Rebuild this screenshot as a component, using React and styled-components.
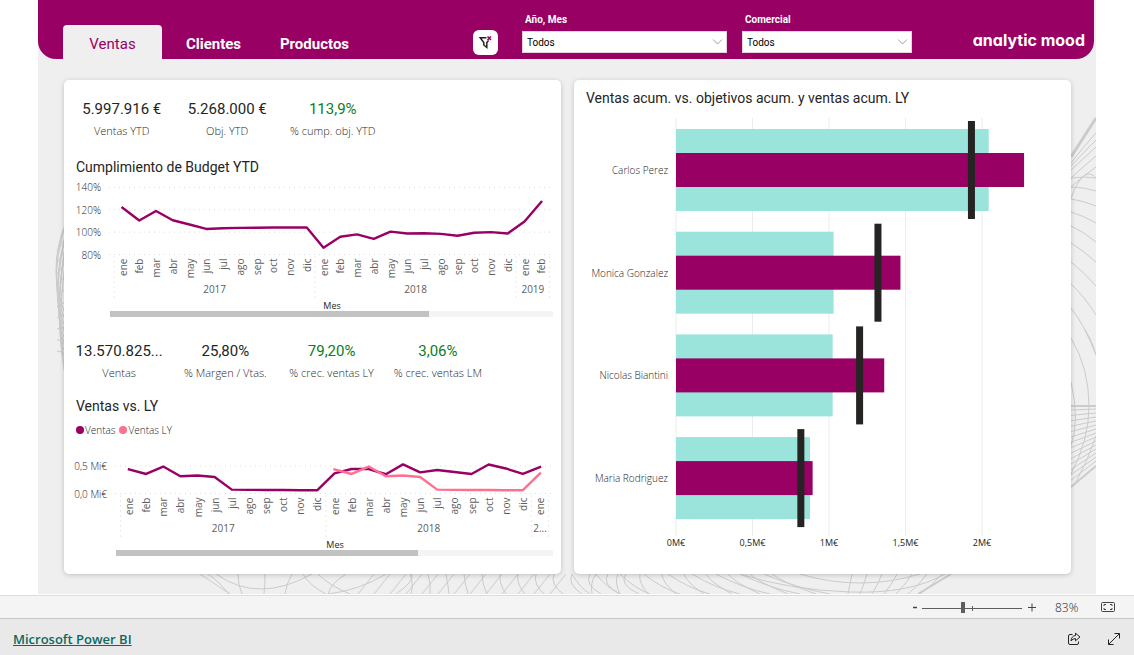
import React from "react";
import styled, { createGlobalStyle, css } from "styled-components";

const brand = "#980064";
const pink = "#ff6f91";
const mint = "#9ae4dc";
const displayFont = `Roboto, "Liberation Sans", sans-serif`;
const uiFont = `"Open Sans", "Noto Sans", sans-serif`;

const GlobalStyle = createGlobalStyle`
  * { box-sizing: border-box; }
  body { margin: 0; background: #fff; font-family: ${uiFont}; color: #252423; }
  button, select, input { font: inherit; }
`;

const Page = styled.div`
  display: flex;
  flex-direction: column;
  min-height: 100vh;
`;

const Canvas = styled.main`
  position: relative;
  margin: 0 38px 1px;
  flex: 1;
  background: #efefef;
`;

const Pattern = styled.svg`
  position: absolute;
  inset: 0;
  width: 100%;
  height: 100%;
  fill: none;
  stroke: #cbcbcb;
  stroke-width: 1;
`;

const Header = styled.header`
  position: relative;
  display: flex;
  align-items: flex-end;
  height: 59px;
  margin-right: 2px;
  padding: 0 9px 0 25px;
  background: ${brand};
  border-radius: 0 0 18px 18px;
`;

const Tabs = styled.nav`
  display: flex;
  flex: 1;
  gap: 2px;
`;

const Tab = styled.button`
  width: 99px;
  height: 34px;
  padding: 4px 0 0;
  border: 0;
  border-radius: 4px 4px 0 0;
  font-family: ${displayFont};
  font-size: 15px;
  line-height: 20px;
  font-weight: 700;
  color: #fff;
  background: transparent;
  ${(p) => p.$active && css`
    font-weight: 400;
    color: ${brand};
    background: #efefef;
  `}
`;

const ClearButton = styled.button`
  display: grid;
  place-items: center;
  width: 25px;
  height: 25px;
  margin: 0 24px 4px 0;
  padding: 0;
  border: 0;
  border-radius: 6px;
  background: #fff;
`;

const Slicer = styled.label`
  display: flex;
  flex-direction: column;
  width: ${(p) => p.$width}px;
  margin: 0 15px 6px 0;
  color: #fff;
  font-family: ${displayFont};
  font-size: 10px;
  font-weight: 700;
  line-height: 14px;
`;

const SlicerName = styled.span`
  padding: 0 3px;
  margin-bottom: 4px;
`;

const SelectBox = styled.span`
  position: relative;
  display: block;
`;

const Select = styled.select`
  display: block;
  width: 100%;
  height: 22px;
  padding: 2px 4px 0;
  border: 1px solid #e4d3de;
  border-radius: 0;
  appearance: none;
  background: #fff;
  color: #000;
  font-family: ${displayFont};
  font-size: 10px;
  font-weight: 400;
`;

const Chevron = styled.svg`
  position: absolute;
  right: 4px;
  top: 7px;
  pointer-events: none;
`;

const Brand = styled.div`
  width: 113px;
  margin: 0 0 9px 45px;
  color: #fff;
  font-family: Inter, sans-serif;
  font-feature-settings: "cv11";
  font-size: 16px;
  font-weight: 700;
  line-height: 20px;
  text-align: right;
  white-space: nowrap;
`;

const Board = styled.div`
  position: relative;
  display: grid;
  grid-template-columns: 1fr 1fr;
  gap: 13px;
  padding: 21px 25px 20px 26px;
`;

const Card = styled.section`
  min-width: 0;
  background: #fff;
  border-radius: 5px;
  box-shadow: 0 1px 5px rgba(0, 0, 0, 0.2);
`;

const KpiRow = styled.div`
  display: grid;
  grid-template-columns: repeat(4, 1fr);
  padding: ${(p) => p.$top}px 70px 0 ${(p) => p.$left}px;
  text-align: center;
`;

const KpiValue = styled.div`
  height: 18px;
  font-family: ${displayFont};
  font-size: 15px;
  line-height: 18px;
  color: ${(p) => (p.$good ? "#0a7d1c" : "#252423")};
`;

const KpiLabel = styled.div`
  margin-top: 5px;
  font-size: 11px;
  font-weight: 300;
  line-height: 16px;
  color: #2b2a28;
  white-space: nowrap;
`;

const Title = styled.h2`
  margin: ${(p) => p.$top}px 12px 0;
  font-family: ${displayFont};
  font-size: 14px;
  font-weight: 400;
  line-height: 22px;
`;

const Chart = styled.svg`
  display: block;
  width: 100%;
  height: auto;
  font-family: ${uiFont};
  font-size: 10px;
`;

const TickText = styled.text`
  font-weight: 300;
  fill: #252423;
`;

const Legend = styled.div`
  display: flex;
  gap: 4px;
  margin: 5px 12px 0;
  font-size: 10px;
  font-weight: 300;
  line-height: 16px;
  color: #252423;
`;

const LegendItem = styled.span`
  display: flex;
  align-items: center;
  gap: 1px;
  &::before {
    content: "";
    width: 8px;
    height: 8px;
    border-radius: 50%;
    background: ${(p) => p.$color};
  }
`;

const ScrollTrack = styled.div`
  height: 6px;
  margin: 0 8px 0 ${(p) => p.$left}px;
  background: #f4f4f4;
`;

const ScrollThumb = styled.div`
  width: ${(p) => p.$share}%;
  height: 100%;
  background: #c2c2c2;
`;

const StatusBar = styled.div`
  display: flex;
  align-items: center;
  justify-content: flex-end;
  height: 23px;
  padding-right: 18px;
  border-top: 1px solid #dcdcdc;
  background: #f4f4f4;
  color: #444;
  font-size: 12px;
`;

const IconButton = styled.button`
  display: grid;
  place-items: center;
  width: ${(p) => p.$width || 14}px;
  height: 16px;
  padding: 0;
  border: 0;
  background: transparent;
  color: #444;
`;

const ZoomSlider = styled.input`
  appearance: none;
  width: 100px;
  height: 11px;
  margin: 0 3px 0 0;
  background:
    linear-gradient(#605e5c, #605e5c) 50px 4px / 1px 5px no-repeat,
    linear-gradient(#605e5c, #605e5c) 0 6px / 100% 1px no-repeat;
  &::-webkit-slider-thumb {
    appearance: none;
    width: 4px;
    height: 11px;
    background: #605e5c;
  }
`;

const ZoomValue = styled.output`
  width: 24px;
  margin: 0 22px 0 16px;
  font-weight: 300;
  color: #252423;
`;

const Footer = styled.footer`
  display: flex;
  align-items: center;
  justify-content: space-between;
  height: 37px;
  padding: 4px 13px 0;
  border-top: 1px solid #c6c6c6;
  background: #e9e9e9;
`;

const FooterLink = styled.a`
  color: #0b6a5f;
  font-size: 13px;
  font-weight: 600;
  line-height: 20px;
`;

const FooterActions = styled.div`
  display: flex;
  gap: 26px;
`;

const MONTHS = ["ene", "feb", "mar", "abr", "may", "jun", "jul", "ago", "sep", "oct", "nov", "dic"];

const BUDGET = [
  121.7, 110.4, 118.8, 110.6, 106.8, 102.8, 103.5, 103.8, 103.9, 104.1, 104.1, 104.1,
  86, 95.8, 98, 94, 100.4, 98.8, 99, 98.4, 96.7, 99.4, 100, 98.8, 109.5, 127,
];

const SALES_2017 = [0.44, 0.355, 0.49, 0.313, 0.327, 0.3, 0.07, 0.065, 0.065, 0.065, 0.06, 0.06];
const SALES = [
  ...SALES_2017,
  0.365, 0.445, 0.445, 0.35, 0.53, 0.385, 0.427, 0.39, 0.355, 0.527, 0.455, 0.355, 0.48,
];
const SALES_LY = [...SALES_2017, 0.365];

const PEOPLE = [
  { name: "Carlos Perez", sales: 2.275, lastYear: 2.044, target: 1.931 },
  { name: "Monica Gonzalez", sales: 1.467, lastYear: 1.03, target: 1.32 },
  { name: "Nicolas Biantini", sales: 1.361, lastYear: 1.024, target: 1.2 },
  { name: "Maria Rodriguez", sales: 0.893, lastYear: 0.876, target: 0.816 },
];

function TrendChart({ label, height, x0, step, count, gridLeft, labelRight, ticks, y, series, years }) {
  const base = y(ticks[0].value);
  const x = (i) => x0 + i * step;
  return (
    <Chart viewBox={`0 0 497 ${height}`} role="img" aria-label={label}>
      {ticks.map((t) => (
        <g key={t.text}>
          <line x1={gridLeft} x2="489" y1={y(t.value)} y2={y(t.value)} stroke="#dcdcdc" strokeDasharray="1 4" />
          <TickText x={labelRight} y={y(t.value) + 4} textAnchor="end">{t.text}</TickText>
        </g>
      ))}
      {Array.from({ length: count }, (_, i) => (
        <text key={i} transform={`translate(${x(i) + 4} ${base + 4}) rotate(-90)`} textAnchor="end" fill="#605e5c">
          {MONTHS[i % 12]}
        </text>
      ))}
      {years.map((g) => (
        <g key={g.from}>
          <line x1={x(g.from - 0.5)} x2={x(g.from - 0.5)} y1={base + 2} y2={base + 45} stroke="#d4d4d4" strokeDasharray="1 4" />
          <text x={x((g.from + g.to - 1) / 2)} y={base + 38} textAnchor="middle" fill="#605e5c">{g.text}</text>
        </g>
      ))}
      <line x1={x(count - 0.5)} x2={x(count - 0.5)} y1={base + 2} y2={base + 45} stroke="#d4d4d4" strokeDasharray="1 4" />
      <text x={(gridLeft + 491) / 2} y={height - 2} textAnchor="middle" fontSize="9" fill="#252423">Mes</text>
      {series.map((s) => (
        <polyline
          key={s.color}
          points={s.values.map((v, i) => `${x(i + s.offset)},${y(v)}`).join(" ")}
          fill="none"
          stroke={s.color}
          strokeWidth="2.4"
          strokeLinejoin="round"
          strokeLinecap="square"
        />
      ))}
    </Chart>
  );
}

function PeopleChart() {
  const x = (v) => 102 + v * 153;
  const axis = [
    [0, "0M€"],
    [0.5, "0,5M€"],
    [1, "1M€"],
    [1.5, "1,5M€"],
    [2, "2M€"],
  ];
  return (
    <Chart viewBox="0 0 497 465" role="img" aria-label="Ventas por comercial">
      {axis.map(([v, text]) => (
        <g key={text}>
          <line x1={x(v)} x2={x(v)} y1="9" y2="427" stroke="#ececec" />
          <text x={x(v)} y="437" textAnchor="middle" fontSize="9" fill="#252423">{text}</text>
        </g>
      ))}
      {PEOPLE.map((p, i) => {
        const cy = 61 + i * 102.7;
        return (
          <g key={p.name}>
            <TickText x="94" y={cy + 4} textAnchor="end">{p.name}</TickText>
            <rect x={x(0)} y={cy - 41} width={p.lastYear * 153} height="82" fill={mint} />
            <rect x={x(0)} y={cy - 17} width={p.sales * 153} height="34" fill={brand} />
            <rect x={x(p.target) - 3.5} y={cy - 49} width="7" height="98" fill="#252423" />
          </g>
        );
      })}
    </Chart>
  );
}

function BackgroundPattern() {
  const fan = [
    [163, 146, 133], [166, 152, 140], [170, 158, 147], [178, 166, 156],
    [187, 175, 167], [198, 164, 178], [178, 176, 178],
    [187, 187, 191], [199, 201, 206], [212, 216, 223], [226, 232, 242], [243, 251, 262],
    [262, 272, 286], [284, 296, 315], [308, 324, 355],
  ];
  return (
    <Pattern viewBox="38 0 1058 594" preserveAspectRatio="none" aria-hidden="true">
      <path d="M1071 157L1096 118" strokeWidth="3" />
      {fan.map(([a, b, c]) => <path key={`${a}-${c}`} d={`M1071 ${a}Q1084 ${b} 1096 ${c}`} />)}
      <path d="M1071 338Q1089 368 1089 406Q1089 440 1071 474M1071 382Q1080 420 1071 446M1085 330Q1092 340 1096 355" />
      <path d="M1071 406H1096" strokeWidth="2" />
      {Array.from({ length: 14 }, (_, i) => (
        <path key={i} d={`M1071 ${410 + i * 5.4}L1096 ${409 + i * 4}`} />
      ))}
      <path d="M1071 487L1096 466" strokeWidth="2" />
      <path d="M1096 436Q1088 460 1076 482" />
      {Array.from({ length: 10 }, (_, i) => (
        <path key={i} d={`M${66 - (i % 3)} ${222 + i * 4}Q${46 + i} ${270 + i * 7} 66 ${316 + i * 7}M66 ${236 + i * 13}L57 ${252 + i * 11}`} />
      ))}
      <path d="M200 574L230 594M208 574Q220 582 229 594M216 574Q258 604 312 574M238 574Q238 585 242 594M265 574Q265 585 264 594M292 574Q286 584 285 594M346 574Q330 584 328 594Q360 590 386 574" />
      <path d="M303 574Q310 586 326 594M318 574Q330 586 350 594M412 574Q414 582 396 594" />
      {Array.from({ length: 13 }, (_, i) => (
        <path key={i} d={`M${374 + i * 16} 574L${358 + i * 16} 594M${410 + i * 18} 574Q${414 + i * 17} 584 ${411 + i * 19} 594`} />
      ))}
      {Array.from({ length: 9 }, (_, i) => (
        <path key={i} d={`M${572 + i * 24} 574Q${580 + i * 27} 588 ${590 + i * 30} 594M${596 + i * 22} 574Q${590 + i * 24} 582 ${592 + i * 28} 594`} />
      ))}
      <path d="M740 574Q790 590 850 592Q910 594 945 574M800 574Q860 592 920 574" />
      {Array.from({ length: 7 }, (_, i) => (
        <path key={i} d={`M${852 + i * 15} 574Q${850 + i * 14} 584 ${848 + i * 12} 594`} />
      ))}
      <path d="M951 574L918 594" strokeWidth="2" />
    </Pattern>
  );
}

function SlicerField({ name, width }) {
  return (
    <Slicer $width={width}>
      <SlicerName>{name}</SlicerName>
      <SelectBox>
        <Select defaultValue="Todos">
          <option>Todos</option>
        </Select>
        <Chevron width="11" height="8" viewBox="0 0 11 8" fill="none" stroke="#a6978f">
          <path d="M1 1.5L5.500 6L10 1.500" />
        </Chevron>
      </SelectBox>
    </Slicer>
  );
}

function Kpi({ value, label, good }) {
  return (
    <div>
      <KpiValue $good={good}>{value}</KpiValue>
      <KpiLabel>{label}</KpiLabel>
    </div>
  );
}

export default function App() {
  return (
    <Page>
      <GlobalStyle />
      <Canvas>
        <BackgroundPattern />
        <Header>
          <Tabs>
            <Tab $active>Ventas</Tab>
            <Tab>Clientes</Tab>
            <Tab>Productos</Tab>
          </Tabs>
          <ClearButton aria-label="Borrar filtros">
            <svg width="15" height="15" viewBox="0 0 15 15" fill="none">
              <path d="M8.500 2.700H2.200L5.800 7.500V10L8.800 12.500V7.500L10.600 5.500" stroke="#252423" strokeWidth="1.500" />
              <path d="M9.500 1.500L13 5M13 1.500L9.500 5" stroke={brand} strokeWidth="1.600" />
            </svg>
          </ClearButton>
          <SlicerField name="Año, Mes" width={205} />
          <SlicerField name="Comercial" width={170} />
          <Brand>analytic mood</Brand>
        </Header>
        <Board>
          <Card>
            <KpiRow $top={20} $left={5}>
              <Kpi value="5.997.916 €" label="Ventas YTD" />
              <Kpi value="5.268.000 €" label="Obj. YTD" />
              <Kpi value="113,9%" label="% cump. obj. YTD" good />
            </KpiRow>
            <Title $top={17}>Cumplimiento de Budget YTD</Title>
            <TrendChart
              label="Cumplimiento de Budget YTD"
              height={133}
              x0={58.5}
              step={16.75}
              count={26}
              gridLeft={45}
              labelRight={37}
              ticks={[
                { value: 80, text: "80%" },
                { value: 100, text: "100%" },
                { value: 120, text: "120%" },
                { value: 140, text: "140%" },
              ]}
              y={(v) => 76.5 - (v - 80) * 1.12}
              series={[{ color: brand, offset: 0, values: BUDGET }]}
              years={[
                { from: 0, to: 12, text: "2017" },
                { from: 12, to: 24, text: "2018" },
                { from: 24, to: 26, text: "2019" },
              ]}
            />
            <ScrollTrack $left={46}>
              <ScrollThumb $share={72} />
            </ScrollTrack>
            <KpiRow $top={25} $left={2}>
              <Kpi value="13.570.825..." label="Ventas" />
              <Kpi value="25,80%" label="% Margen / Vtas." />
              <Kpi value="79,20%" label="% crec. ventas LY" good />
              <Kpi value="3,06%" label="% crec. ventas LM" good />
            </KpiRow>
            <Title $top={14}>Ventas vs. LY</Title>
            <Legend>
              <LegendItem $color={brand}>Ventas</LegendItem>
              <LegendItem $color={pink}>Ventas LY</LegendItem>
            </Legend>
            <TrendChart
              label="Ventas vs. LY"
              height={112}
              x0={65}
              step={17.125}
              count={25}
              gridLeft={51}
              labelRight={43}
              ticks={[
                { value: 0, text: "0,0 Mi€" },
                { value: 0.5, text: "0,5 Mi€" },
              ]}
              y={(v) => 55.5 - v * 55}
              series={[
                { color: brand, offset: 0, values: SALES },
                { color: pink, offset: 12, values: SALES_LY },
              ]}
              years={[
                { from: 0, to: 12, text: "2017" },
                { from: 12, to: 24, text: "2018" },
                { from: 24, to: 25, text: "2..." },
              ]}
            />
            <ScrollTrack $left={52}>
              <ScrollThumb $share={69} />
            </ScrollTrack>
          </Card>
          <Card>
            <Title $top={7}>Ventas acum. vs. objetivos acum. y ventas acum. LY</Title>
            <PeopleChart />
          </Card>
        </Board>
      </Canvas>
      <StatusBar>
        <IconButton aria-label="Alejar">
          <svg width="10" height="10" viewBox="0 0 10 10"><path d="M3 5.500H7" stroke="currentColor" strokeWidth="1.500" /></svg>
        </IconButton>
        <ZoomSlider type="range" min="0" max="100" defaultValue="41" aria-label="Zoom" />
        <IconButton aria-label="Acercar">
          <svg width="10" height="10" viewBox="0 0 10 10"><path d="M1 5.500H9M5 1.500V9.500" stroke="currentColor" /></svg>
        </IconButton>
        <ZoomValue>83%</ZoomValue>
        <IconButton $width={15} aria-label="Ajustar a la página">
          <svg width="15" height="11" viewBox="0 0 15 11" fill="none" stroke="currentColor">
            <rect x="0.500" y="0.500" width="13" height="9" rx="1" />
            <path d="M3 4V2.500H5M9 2.500H11V4M11 6V7.500H9M5 7.500H3V6" />
          </svg>
        </IconButton>
      </StatusBar>
      <Footer>
        <FooterLink href="#power-bi">Microsoft Power BI</FooterLink>
        <FooterActions>
          <IconButton aria-label="Compartir">
            <svg width="14" height="14" viewBox="0 0 14 14" fill="none" stroke="#252423" strokeLinejoin="round">
              <path d="M5.500 2.500H3Q1.500 2.500 1.500 4V11Q1.500 12.500 3 12.500H10Q11.500 12.500 11.500 11V9.500" />
              <path d="M8.500 1.200L13 5L8.500 8.800V6.600Q5.800 6.400 4 9Q4.300 4 8.500 3.500Z" />
            </svg>
          </IconButton>
          <IconButton aria-label="Pantalla completa">
            <svg width="14" height="14" viewBox="0 0 14 14" fill="none" stroke="#252423">
              <path d="M1.500 12.500L12.500 1.500M7.500 1.500H12.500V6.500M1.500 7.500V12.500H6.500" />
            </svg>
          </IconButton>
        </FooterActions>
      </Footer>
    </Page>
  );
}
